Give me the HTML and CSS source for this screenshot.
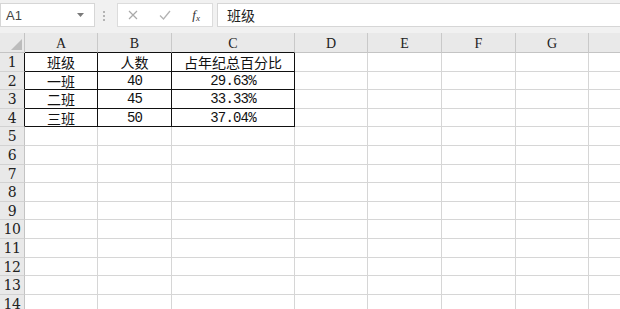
FILE: index.html
```
<!DOCTYPE html>
<html lang="zh-CN">
<head>
<meta charset="UTF-8">
<meta name="viewport" content="width=device-width, initial-scale=1.0">
<title>班级</title>
<link rel="stylesheet" href="styles.css">
</head>
<body>
  <div class="toolbar">
    <div class="namebox">
      <span>A1</span>
      <svg class="arrow" width="7" height="4" viewBox="0 0 7 4"><path d="M0 0H7L3.5 4Z" fill="#7a7a7a"/></svg>
    </div>
    <div class="grip"><i></i><i></i><i></i></div>
    <div class="fnbox">
      <span class="fn"><svg width="10" height="10" viewBox="0 0 10 10"><path d="M1 1L9 9M9 1L1 9" stroke="#a9a9a9" stroke-width="1.2" fill="none"/></svg></span>
      <span class="fn"><svg width="12" height="10" viewBox="0 0 12 10"><path d="M1 5.5L4.5 9L11 1" stroke="#b3b3b3" stroke-width="1.3" fill="none"/></svg></span>
      <span class="fn fx"><i>f</i><i class="sub">x</i></span>
    </div>
    <div class="formula">班级</div>
  </div>

  <div class="sheet">
    <div class="corner"></div>
    <div class="ch edge">A</div><div class="ch edge">B</div><div class="ch edge">C</div><div class="ch">D</div><div class="ch">E</div><div class="ch">F</div><div class="ch">G</div><div class="ch"></div>

    <div class="rh edge">1</div><div class="c d">班级</div><div class="c d">人数</div><div class="c d">占年纪总百分比</div><div class="c"></div><div class="c"></div><div class="c"></div><div class="c"></div><div class="c"></div>
    <div class="rh edge">2</div><div class="c d">一班</div><div class="c d num">40</div><div class="c d num">29.63%</div><div class="c"></div><div class="c"></div><div class="c"></div><div class="c"></div><div class="c"></div>
    <div class="rh edge">3</div><div class="c d">二班</div><div class="c d num">45</div><div class="c d num">33.33%</div><div class="c"></div><div class="c"></div><div class="c"></div><div class="c"></div><div class="c"></div>
    <div class="rh edge">4</div><div class="c d">三班</div><div class="c d num">50</div><div class="c d num">37.04%</div><div class="c"></div><div class="c"></div><div class="c"></div><div class="c"></div><div class="c"></div>
    <div class="rh">5</div><div class="c"></div><div class="c"></div><div class="c"></div><div class="c"></div><div class="c"></div><div class="c"></div><div class="c"></div><div class="c"></div>
    <div class="rh">6</div><div class="c"></div><div class="c"></div><div class="c"></div><div class="c"></div><div class="c"></div><div class="c"></div><div class="c"></div><div class="c"></div>
    <div class="rh">7</div><div class="c"></div><div class="c"></div><div class="c"></div><div class="c"></div><div class="c"></div><div class="c"></div><div class="c"></div><div class="c"></div>
    <div class="rh">8</div><div class="c"></div><div class="c"></div><div class="c"></div><div class="c"></div><div class="c"></div><div class="c"></div><div class="c"></div><div class="c"></div>
    <div class="rh">9</div><div class="c"></div><div class="c"></div><div class="c"></div><div class="c"></div><div class="c"></div><div class="c"></div><div class="c"></div><div class="c"></div>
    <div class="rh">10</div><div class="c"></div><div class="c"></div><div class="c"></div><div class="c"></div><div class="c"></div><div class="c"></div><div class="c"></div><div class="c"></div>
    <div class="rh">11</div><div class="c"></div><div class="c"></div><div class="c"></div><div class="c"></div><div class="c"></div><div class="c"></div><div class="c"></div><div class="c"></div>
    <div class="rh">12</div><div class="c"></div><div class="c"></div><div class="c"></div><div class="c"></div><div class="c"></div><div class="c"></div><div class="c"></div><div class="c"></div>
    <div class="rh">13</div><div class="c"></div><div class="c"></div><div class="c"></div><div class="c"></div><div class="c"></div><div class="c"></div><div class="c"></div><div class="c"></div>
    <div class="rh">14</div><div class="c"></div><div class="c"></div><div class="c"></div><div class="c"></div><div class="c"></div><div class="c"></div><div class="c"></div><div class="c"></div>
  </div>
</body>
</html>
```

FILE: styles.css
```
* {
  box-sizing: border-box;
}
body {
  margin: 0;
  height: 309px;
  overflow: hidden;
  background: #fff;
  font-family: "Liberation Sans", Arial, sans-serif;
}
.toolbar {
  display: flex;
  align-items: flex-start;
  height: 33px;
  padding-top: 3px;
  background: #f1f1f1;
}
.namebox {
  display: flex;
  align-items: center;
  justify-content: space-between;
  width: 95px;
  height: 24px;
  padding: 0 10px 0 5px;
  background: #fff;
  border: 1px solid #d6d6d6;
  font-size: 13px;
  color: #444;
}
.grip {
  display: flex;
  flex-direction: column;
  gap: 2px;
  margin: 8px 12px 0 8px;
}
.grip i {
  width: 2px;
  height: 2px;
  background: #b4b4b4;
}
.fnbox {
  display: flex;
  width: 96px;
  height: 24px;
  background: #fff;
  border: 1px solid #dcdcdc;
}
.fn {
  display: flex;
  align-items: center;
  justify-content: center;
  width: 32px;
}
.fnbox .fn:first-child {
  margin-left: -1px;
}
.fx {
  font-family: "Liberation Serif", serif;
  color: #333;
  font-size: 13px;
}
.fx .sub {
  font-size: 9px;
  margin-top: 5px;
}
.formula {
  flex: 1;
  height: 24px;
  margin: 0 -2px 0 4px;
  padding: 2px 0 0 9px;
  background: #fff;
  border: 1px solid #d6d6d6;
  font-family: "Noto Sans CJK SC", sans-serif;
  font-size: 14px;
  line-height: 18px;
  color: #222;
}
.sheet {
  display: grid;
  grid-template-columns: 25px 73px 74px 123px 73px 74px 74px 73px 60px;
  grid-template-rows: 20px;
  grid-auto-rows: 18.6px;
}
.sheet > div {
  border-right: 1px solid #d6d6d6;
  border-bottom: 1px solid #d6d6d6;
}
.corner {
  position: relative;
  background: #e9e9e9;
  border-right-color: #c4c4c4 !important;
  border-bottom-color: #c4c4c4 !important;
}
.corner::after {
  content: "";
  position: absolute;
  right: 2px;
  bottom: 2px;
  border-left: 11px solid transparent;
  border-bottom: 11px solid #bcbcbc;
}
.ch {
  background: #e9e9e9;
  border-right-color: #c9c9c9 !important;
  border-bottom-color: #c4c4c4 !important;
  text-align: center;
  padding-top: 3px;
  font-family: "Liberation Serif", serif;
  font-size: 14px;
  line-height: 16px;
  color: #222;
}
.ch.edge {
  border-bottom-color: #111 !important;
}
.rh {
  background: #e9e9e9;
  border-right-color: #c4c4c4 !important;
  border-bottom-color: #d2d2d2 !important;
  text-align: center;
  font-family: "DejaVu Serif", serif;
  font-size: 14px;
  line-height: 18px;
  color: #222;
  letter-spacing: -0.5px;
}
.rh.edge {
  border-right-color: #111 !important;
}
.c {
  text-align: center;
  font-family: "Noto Sans CJK SC", sans-serif;
  font-size: 14px;
  line-height: 18px;
  color: #111;
  white-space: nowrap;
}
.c.d {
  border-right-color: #111;
  border-bottom-color: #111;
}
.c.num {
  font-family: "Liberation Mono", monospace;
  font-size: 14px;
  letter-spacing: -0.8px;
  line-height: 18px;
}
```
